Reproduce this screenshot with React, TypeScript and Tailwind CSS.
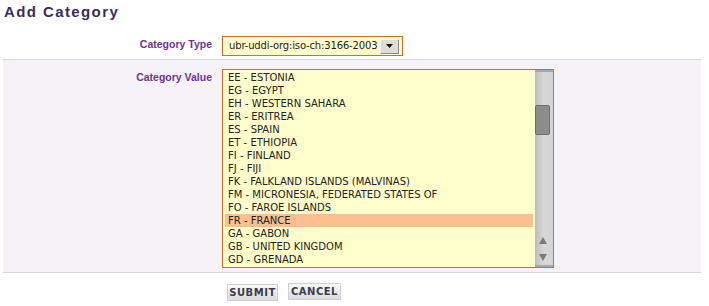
import React from "react";

const countries = [
  "EE - ESTONIA",
  "EG - EGYPT",
  "EH - WESTERN SAHARA",
  "ER - ERITREA",
  "ES - SPAIN",
  "ET - ETHIOPIA",
  "FI - FINLAND",
  "FJ - FIJI",
  "FK - FALKLAND ISLANDS (MALVINAS)",
  "FM - MICRONESIA, FEDERATED STATES OF",
  "FO - FAROE ISLANDS",
  "FR - FRANCE",
  "GA - GABON",
  "GB - UNITED KINGDOM",
  "GD - GRENADA",
];

const App: React.FC = () => {
  return (
    <div className="w-[709px] h-[306px] bg-white font-['DejaVu_Sans',sans-serif] overflow-hidden">
      {/* Title */}
      <div className="h-[30px] pl-[4px] pt-[2px]">
        <h1 className="text-[15px] font-bold tracking-[1.4px] text-[#3c2c5c] leading-[20px] font-['Liberation_Sans',sans-serif]">
          Add Category
        </h1>
      </div>

      <div className="ml-[3px] w-[698px]">
        {/* Category Type */}
        <div className="flex border-b border-[#d9d7db] pt-[6px] pb-[3px]">
          <div className="w-[209px] text-right pt-[1px] text-[10.5px] font-bold text-[#6f3395] font-['Liberation_Sans',sans-serif] leading-[14px]">
            Category Type
          </div>
          <div className="ml-[10px] w-[181px] h-[20px] border border-[#e0672a] bg-[#ffffcc] flex items-center pl-[6px] pr-[3px]">
            <span className="text-[10px] tracking-[-0.15px] text-[#222] leading-[14px] flex-1 whitespace-nowrap">
              ubr-uddi-org:iso-ch:3166-2003
            </span>
            <span className="w-[19px] h-[15px] bg-[#dcdcdc] border border-t-[#f4f4f4] border-l-[#f4f4f4] border-r-[#8a8a8a] border-b-[#8a8a8a] flex items-center justify-center">
              <svg width="7" height="4" viewBox="0 0 7 4">
                <path d="M0 0 L7 0 L3.5 4 Z" fill="#111" />
              </svg>
            </span>
          </div>
        </div>

        {/* Category Value */}
        <div className="flex bg-[#f5f3f7] border-b border-[#d9d7db] pt-[9px] pb-[4px]">
          <div className="w-[209px] text-right pt-[1px] text-[10.5px] font-bold text-[#6f3395] font-['Liberation_Sans',sans-serif] leading-[14px]">
            Category Value
          </div>
          <div className="ml-[10px] w-[332px] h-[199px] border border-[#e0672a] bg-[#ffffcc] flex overflow-hidden">
            <div className="flex-1 pl-[2px] pt-[1px]">
              {countries.map((c) => (
                <div
                  key={c}
                  className={`h-[13px] pl-[3px] text-[10px] leading-[13px] text-[#222] whitespace-nowrap ${
                    c === "FR - FRANCE" ? "bg-[#fdbf8f] mr-[2px]" : ""
                  }`}
                >
                  {c}
                </div>
              ))}
            </div>
            {/* scrollbar */}
            <div className="w-[18px] h-full bg-gradient-to-r from-[#bdbdbd] via-[#d8d8d8] to-[#d4d4d4] flex flex-col">
              <div className="h-[2px] bg-[#a9a9a9]" />
              <div className="mt-[33px] h-[30px] w-[15px] bg-[#8d8d8d] border border-[#6e6e6e] rounded-[2px]" />
              <div className="flex-1" />
              <div className="flex flex-col items-center gap-[10px] pb-[4px] pr-[3px]">
                <svg width="8" height="7" viewBox="0 0 8 7">
                  <path d="M4 0 L8 7 L0 7 Z" fill="#7a7a7a" />
                </svg>
                <svg width="8" height="7" viewBox="0 0 8 7">
                  <path d="M0 0 L8 0 L4 7 Z" fill="#7a7a7a" />
                </svg>
              </div>
              <div className="h-[2px] bg-[#a9a9a9]" />
            </div>
          </div>
        </div>

        {/* Buttons */}
        <div className="flex items-start pl-[224px] pt-[10px] gap-[10px]">
          <button className="mt-[1px] w-[51px] h-[17px] border border-[#cfcfcf] bg-gradient-to-b from-[#fafafa] to-[#dcdcdc] text-[10px] font-bold text-[#3b3b4f] leading-[15px] tracking-[0.5px]">
            SUBMIT
          </button>
          <button className="w-[53px] h-[17px] border border-[#cfcfcf] bg-gradient-to-b from-[#fafafa] to-[#dcdcdc] text-[10px] font-bold text-[#3b3b4f] leading-[15px] tracking-[0.5px]">
            CANCEL
          </button>
        </div>
      </div>
    </div>
  );
};

export default App;
